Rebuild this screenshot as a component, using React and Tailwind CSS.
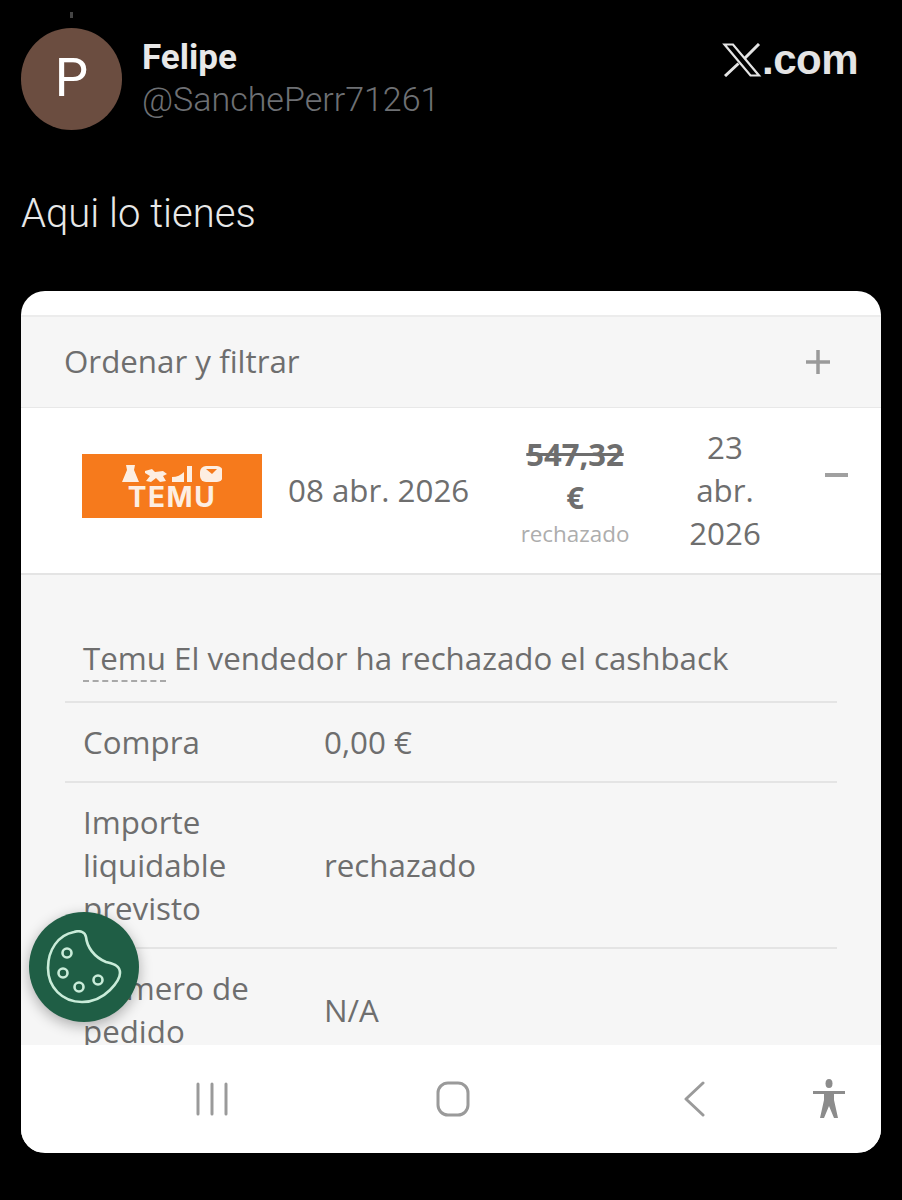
import React from 'react';

const cardFont = { fontFamily: '"Open Sans", sans-serif' };

function XLogo() {
  return (
    <svg viewBox="0 0 40 34" className="w-[40px] h-[34px]" fill="none" stroke="#e4e4e4" strokeWidth="2.200">
      <path d="M2.500 1.500h8.500l26 31h-8.500z" />
      <path d="M37 1L22.500 15.500M16.500 20.500L3 33" strokeWidth="3" />
    </svg>
  );
}

function TemuLogo() {
  return (
    <div className="w-[180px] h-[64px] mb-[10px] bg-[#f67a1c] flex flex-col items-center pt-[11px] shrink-0">
      <svg viewBox="0 0 100 18" className="w-[100px] h-[18px]" fill="#fdeee2">
        <path d="M4 0h9l-1 5 5 12H0L5 5z" />
        <path d="M23 6l7-2 3 3 8-1 4 3-4 2 3 5-6 1-4-4-5 4-5-1 4-5-5-3z" />
        <path d="M50 12c5 0 9-2 12-5v10H50zM65 1h5v16h-5z" />
        <rect x="78" y="1" width="23" height="16" rx="6" />
        <path d="M84 4h11l-5 5z" fill="#f67a1c" />
      </svg>
      <span className="text-[28px] leading-[22px] mt-[3px] font-bold text-[#fdeee2] tracking-[1.500px]" style={{ fontFamily: 'Inter, sans-serif' }}>
        TEMU
      </span>
    </div>
  );
}

function DetailRow({ label, value, last }) {
  return (
    <div className={`flex items-center pl-[18px] pt-[18px] pb-[17px] leading-[43px] ${last ? '' : 'border-b-2 border-[#e4e4e4]'}`}>
      <div className="w-[241px] shrink-0">{label}</div>
      <div>{value}</div>
    </div>
  );
}

function CookieButton() {
  return (
    <div className="absolute left-[8px] top-[621px] w-[110px] h-[110px] rounded-full bg-[#1f5e45] shadow-[0_4px_14px_rgba(0,0,0,0.3)] flex items-center justify-center">
      <svg viewBox="0 0 76 74" className="w-[76px] h-[74px]" fill="none" stroke="#c9ecd9" strokeWidth="2.600">
        <path d="M28 2c6-2 11 0 12 5 1 10 8 20 20 25 7 2 14 3 14 11 0 4-4 11-10 17-8 8-18 12-28 12C16 72 2 57 2 38 2 20 12 5 28 2z" />
        <circle cx="21" cy="23" r="4.500" />
        <circle cx="17" cy="43" r="4.500" />
        <circle cx="33" cy="57" r="4.500" />
        <circle cx="52" cy="50" r="4.500" />
      </svg>
    </div>
  );
}

function NavBar() {
  return (
    <div className="h-[107px] bg-white flex items-center pt-[1px]">
      <svg viewBox="0 0 32 34" className="w-[32px] h-[34px] ml-[175px]" stroke="#9a9a9a" strokeWidth="3" strokeLinecap="round">
        <path d="M2 2v30M16 2v30M30 2v30" />
      </svg>
      <svg viewBox="0 0 34 36" className="w-[34px] h-[36px] ml-[208px]" fill="none" stroke="#9a9a9a" strokeWidth="3">
        <rect x="2" y="2" width="30" height="32" rx="10" />
      </svg>
      <svg viewBox="0 0 22 36" className="w-[22px] h-[36px] ml-[213px]" fill="none" stroke="#9a9a9a" strokeWidth="3" strokeLinecap="round" strokeLinejoin="round">
        <path d="M20 2L3 18l17 16" />
      </svg>
      <svg viewBox="0 0 34 40" className="w-[34px] h-[40px] ml-[107px]" fill="#8c8c8c">
        <ellipse cx="17" cy="4.500" rx="3.500" ry="4.500" />
        <path d="M1 12h32v3H22v6l4 18h-4L17 27l-5 12H8l4-18v-6H1z" />
      </svg>
    </div>
  );
}

export default function App() {
  return (
    <div className="w-[902px] h-[1200px] bg-black overflow-hidden">
      <div className="ml-[70px] pt-[12px]">
        <div className="w-[3px] h-[6px] bg-[#444444]" />
      </div>

      {/* Cabecera del tweet */}
      <div className="flex items-start pl-[21px] pr-[44px] mt-[10px]" style={{ fontFamily: 'Roboto, sans-serif' }}>
        <div className="w-[101px] h-[102px] rounded-full bg-[#6b4d40] flex items-center justify-center text-white text-[53px] shrink-0">
          P
        </div>
        <div className="ml-[20px] mt-[9px]">
          <div className="text-[35px] leading-[42px] font-bold text-[#e8e8e8]">Felipe</div>
          <div className="text-[34px] leading-[41px] text-[#6e7074] font-light">@SanchePerr71261</div>
        </div>
        <div className="ml-auto mt-[14px] flex items-center">
          <XLogo />
          <span className="text-[42px] leading-[36px] font-bold text-[#e4e4e4] tracking-[-0.5px]" style={{ fontFamily: '"Liberation Sans", sans-serif' }}>
            .com
          </span>
        </div>
      </div>

      <p className="ml-[21px] mt-[59px] text-[40px] leading-[50px] text-[#e8e8e8] font-light" style={{ fontFamily: 'Roboto, sans-serif' }}>
        Aqui lo tienes
      </p>

      {/* Captura */}
      <div className="relative mx-[21px] mt-[52px] h-[862px] rounded-[24px] overflow-hidden bg-white text-[#6e6e6e]" style={cardFont}>
        <div className="h-[26px] border-b-2 border-[#ececec]" />

        <div className="h-[91px] bg-[#f6f6f6] flex items-center justify-between pl-[43px] pr-[50px] border-b border-[#e8e8e8]">
          <span className="text-[31.300px] mb-[2px]">Ordenar y filtrar</span>
          <svg viewBox="0 0 26 26" className="w-[26px] h-[26px]" stroke="#9a9a9a" strokeWidth="3.500">
            <path d="M13 1v24M1 13h24" />
          </svg>
        </div>

        <div className="h-[167px] flex items-center pl-[61px] border-b-2 border-[#e4e4e4]">
          <TemuLogo />
          <span className="ml-[26px] w-[200px] shrink-0 text-[31.300px] whitespace-nowrap">08 abr. 2026</span>
          <div className="w-[140px] ml-[17px] flex flex-col items-center shrink-0">
            <span className="text-[31px] leading-[43px] font-bold line-through">547,32</span>
            <span className="text-[31px] leading-[43px] font-bold">€</span>
            <span className="text-[22.400px] leading-[30px] text-[#adadad] whitespace-nowrap">rechazado</span>
          </div>
          <div className="w-[100px] ml-[30px] shrink-0 text-center text-[31.300px] leading-[43px]">
            23
            <br />
            abr.
            <br />
            2026
          </div>
          <div className="w-[23px] h-[4px] bg-[#a0a0a0] ml-[50px] mb-[32px] shrink-0" />
        </div>

        <div className="h-[470px] bg-[#f6f6f6] overflow-hidden pt-[61px] px-[44px] text-[31.300px]">
          <div className="pl-[18px] pb-[20px] leading-[45px] border-b-2 border-[#e4e4e4]">
            <span className="border-b-2 border-dashed border-[#a8a8a8] pb-[1px]">Temu</span> El vendedor ha rechazado el cashback
          </div>
          <DetailRow label="Compra" value="0,00 €" />
          <DetailRow
            label={
              <>
                Importe
                <br />
                liquidable
                <br />
                previsto
              </>
            }
            value="rechazado"
          />
          <DetailRow
            label={
              <>
                Número de
                <br />
                pedido
              </>
            }
            value="N/A"
            last
          />
        </div>

        <NavBar />
        <CookieButton />
      </div>
    </div>
  );
}
